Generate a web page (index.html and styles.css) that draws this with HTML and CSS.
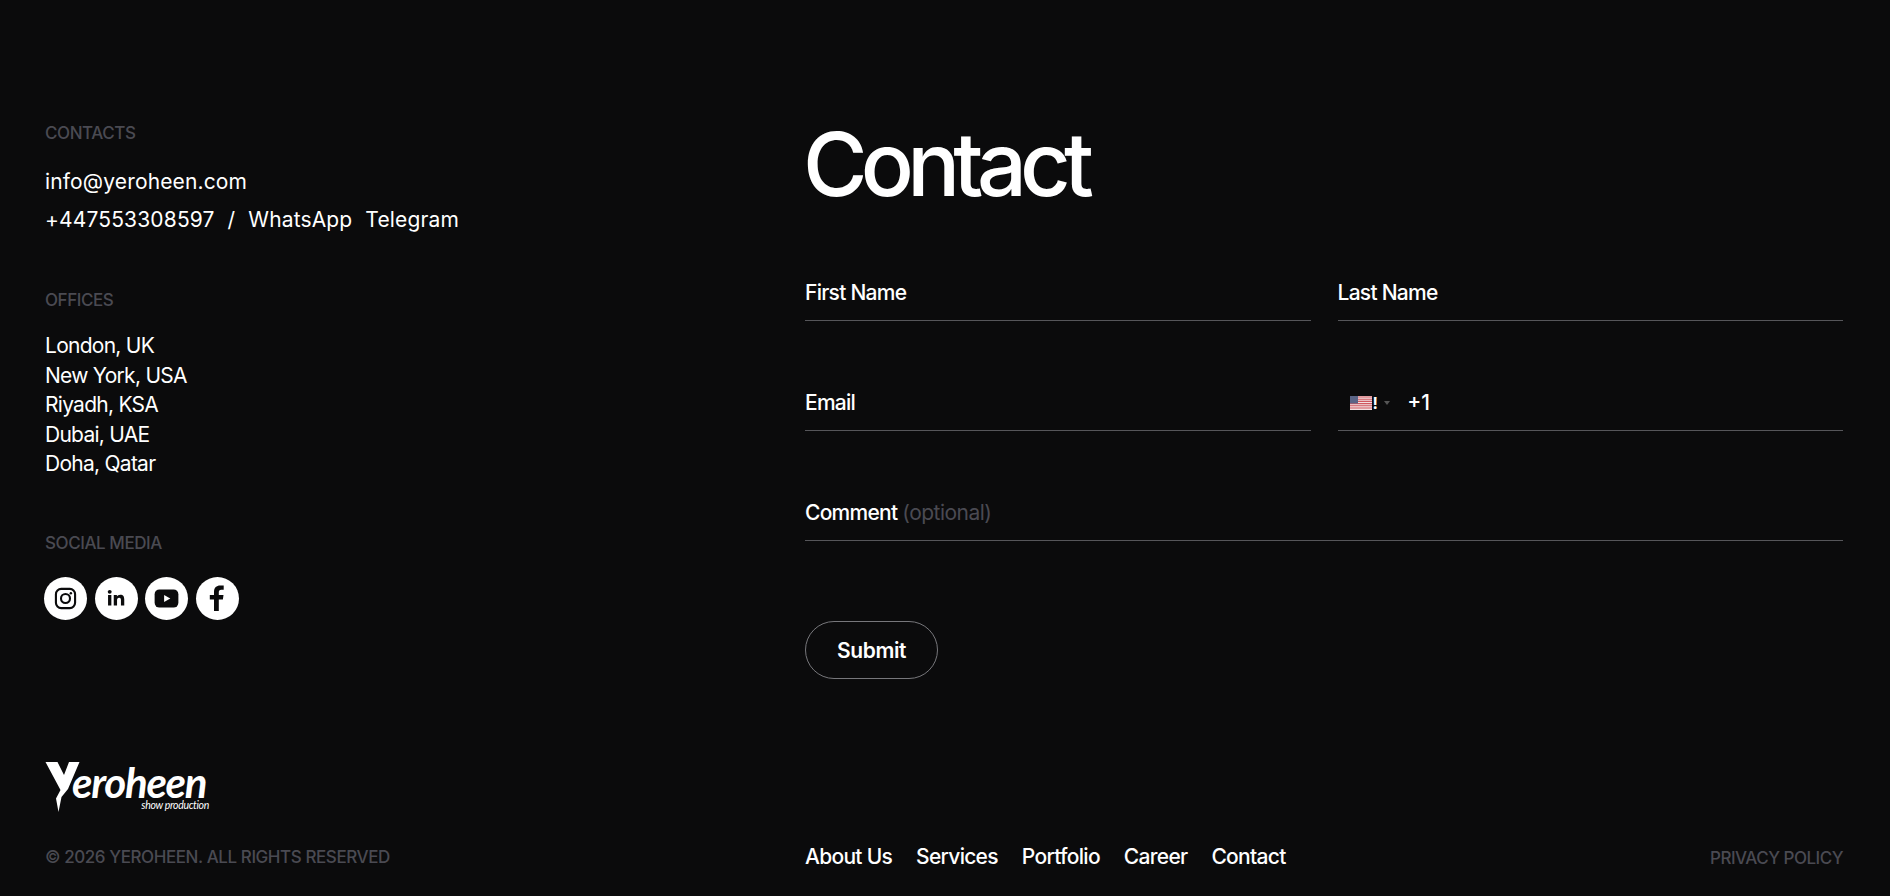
FILE: index.html
```html
<!DOCTYPE html>
<html lang="en">
<head>
<meta charset="utf-8">
<title>Contact</title>
<link rel="stylesheet" href="styles.css">
</head>
<body>
<div class="page">
  <main class="main">
    <aside class="side">
      <section class="block block-contacts">
        <h3 class="label">Contacts</h3>
        <div class="contact-lines">
          <a class="contact-line">info@yeroheen.com</a>
          <div class="contact-line phone"><span>+447553308597</span><span>/</span><span>WhatsApp</span><span>Telegram</span></div>
        </div>
      </section>
      <section class="block block-offices">
        <h3 class="label">Offices</h3>
        <ul class="offices">
          <li>London, UK</li>
          <li>New York, USA</li>
          <li>Riyadh, KSA</li>
          <li>Dubai, UAE</li>
          <li>Doha, Qatar</li>
        </ul>
      </section>
      <section class="block">
        <h3 class="label">Social media</h3>
        <div class="socials">
          <a class="social"><svg viewBox="0 0 24 24" width="23" height="23" fill="none" stroke="#0b0b0c" stroke-width="2.2"><rect x="2" y="2" width="20" height="20" rx="5.5"/><circle cx="12" cy="12" r="4.7"/><circle cx="17.6" cy="6.4" r="1.3" fill="#0b0b0c" stroke="none"/></svg></a>
          <a class="social"><svg viewBox="0 0 24 24" width="18" height="18" fill="#0b0b0c"><circle cx="3.6" cy="3.8" r="2.6"/><rect x="1.4" y="8" width="4.4" height="14"/><path d="M9 8h4.2v2c.8-1.4 2.4-2.4 4.5-2.4 4.2 0 5.3 2.7 5.3 6.5V22h-4.4v-7c0-1.900-.4-3.500-2.400-3.500s-2.800 1.500-2.800 3.500v7H9z"/></svg></a>
          <a class="social"><svg viewBox="0 0 26 20" width="25" height="19"><rect x="0.500" y="0.500" width="25" height="19" rx="5" fill="#0b0b0c"/><path d="M10.500 6.300 17 10l-6.500 3.700z" fill="#fff"/></svg></a>
          <a class="social"><svg viewBox="0 0 16 26" width="16" height="26" fill="#0b0b0c"><path d="M5 26V14.500H.8V10H5V6.800C5 2.500 7.500.4 11.200.4c1.600 0 3 .1 3.500.2v4.200h-2.400c-2 0-2.500 1-2.500 2.400V10h4.700l-.6 4.500H9.800V26z"/></svg></a>
        </div>
      </section>
    </aside>
    <section class="content">
      <h1 class="title">Contact</h1>
      <form class="form">
        <div class="field"><span>First Name</span></div>
        <div class="field"><span>Last Name</span></div>
        <div class="field"><span>Email</span></div>
        <div class="field field-phone">
          <svg class="flag" viewBox="0 0 22 14" width="22" height="14">
            <rect width="22" height="14" fill="#f2dfe0"/>
            <path d="M0 1h22M0 3.200h22M0 5.400h22M0 7.600h22M0 9.800h22M0 12h22" stroke="#d0585f" stroke-width="1.100"/>
            <rect width="8" height="7.500" fill="#5a6486"/>
          </svg>
          <span class="flag-mark">!</span>
          <i class="caret"></i>
          <span class="dial">+1</span>
        </div>
        <div class="field field-wide"><span>Comment <em>(optional)</em></span></div>
      </form>
      <button class="submit" type="button">Submit</button>
    </section>
  </main>
  <footer class="footer">
    <div class="footer-left">
      <div class="logo">
        <svg class="logo-y" viewBox="0 0 70 62" width="70" height="62" fill="#fff"><path d="M5.500 7H17.500L24 20 29 7H39.500L28 34 21.500 42 18.500 57 16 43.500 20.500 35z"/></svg>
        <div class="logo-words">
          <span class="logo-name">eroheen</span>
          <span class="logo-sub">show production</span>
        </div>
      </div>
      <div class="copy">© 2026 Yeroheen. All rights reserved</div>
    </div>
    <nav class="nav"><a>About Us</a><a>Services</a><a>Portfolio</a><a>Career</a><a>Contact</a></nav>
    <a class="privacy">Privacy Policy</a>
  </footer>
</div>
</body>
</html>
```

FILE: styles.css
```css
* { box-sizing: border-box; }
html, body { margin: 0; height: 100%; background: #0b0b0c; }
body { font-family: Inter, "Liberation Sans", sans-serif; color: #fff; overflow: hidden; }
a { color: inherit; text-decoration: none; }
h1, h3, ul { margin: 0; padding: 0; }
ul { list-style: none; }
.page { height: 896px; padding: 122px 47px 0 45px; display: flex; flex-direction: column; }
.main { display: grid; grid-template-columns: 760px 1fr; height: 640px; }
.label { font-size: 17px; line-height: 22px; font-weight: 500; letter-spacing: -0.025em; color: #4a4a52; text-transform: uppercase; }
.block-contacts { margin-bottom: 54px; }
.block-offices { margin-bottom: 53px; }
.contact-lines { margin-top: 23px; display: flex; flex-direction: column; gap: 8px; }
.contact-line { display: block; font-size: 21px; line-height: 30px; letter-spacing: 0.007em; }
.phone { display: flex; gap: 13px; }
.offices { margin-top: 20px; font-size: 21px; line-height: 29.5px; letter-spacing: -0.035em; }
.socials { margin-top: 23px; margin-left: -1px; display: flex; gap: 7.6px; }
.social { width: 43px; height: 43px; border-radius: 50%; background: #fff; display: flex; align-items: center; justify-content: center; }
.title { font-size: 88px; line-height: 100px; font-weight: 500; letter-spacing: -0.077em; margin-top: -8px; margin-left: -2px; }
.form { margin-top: 37px; display: grid; grid-template-columns: 1fr 1fr; column-gap: 27px; row-gap: 40px; }
.field { height: 70px; border-bottom: 1px solid #56565a; display: flex; align-items: flex-end; font-size: 21px; line-height: 26px; font-weight: 500; letter-spacing: -0.035em; padding-bottom: 14px; }
.field em { font-style: normal; font-weight: 400; color: #4a4a52; letter-spacing: -0.025em; }
.field-wide { grid-column: 1 / -1; }
.field-phone { padding: 29px 0 14px 12px; align-items: center; }
.flag { display: block; }
.flag-mark { font-size: 16px; font-weight: 700; margin-left: 1px; }
.caret { width: 0; height: 0; border: 3px solid transparent; border-top: 4px solid #555; border-bottom: 0; margin-left: 7px; }
.dial { margin-left: 17px; font-weight: 500; letter-spacing: 0; }
.submit { margin-top: 80px; width: 133px; height: 58px; border-radius: 29px; border: 1px solid #77777b; background: transparent; color: #fff; font: 600 21px/1 Inter, "Liberation Sans", sans-serif; letter-spacing: -0.02em; display: block; }
.footer { display: grid; grid-template-columns: 760px 1fr auto; align-items: end; }
.footer-left { display: flex; flex-direction: column; }
.logo { display: flex; height: 62px; margin-left: -5px; margin-top: -7px; }
.logo-y { display: block; flex: none; }
.logo-words { display: flex; flex-direction: column; margin-left: -38px; width: 141px; height: 62px; }
.logo-name { font-family: Lato, "Open Sans", sans-serif; font-style: italic; font-weight: 700; font-size: 42px; line-height: 36px; letter-spacing: -0.03em; margin-top: 9px; height: 36px; }
.logo-sub { font-family: Lato, "Open Sans", sans-serif; font-style: italic; font-size: 10.5px; line-height: 10px; align-self: flex-end; letter-spacing: -0.03em; margin-top: 0; padding-right: 4px; }
.copy { font-size: 17px; line-height: 24px; margin-top: 28px; color: #4a4a52; font-weight: 500; text-transform: uppercase; letter-spacing: -0.025em; }
.nav { display: flex; gap: 24px; font-size: 21px; line-height: 28px; font-weight: 500; letter-spacing: -0.034em; margin-bottom: -2px; }
.privacy { font-size: 17px; line-height: 24px; color: #4a4a52; font-weight: 500; text-transform: uppercase; letter-spacing: -0.03em; margin-bottom: -1px; }
```
